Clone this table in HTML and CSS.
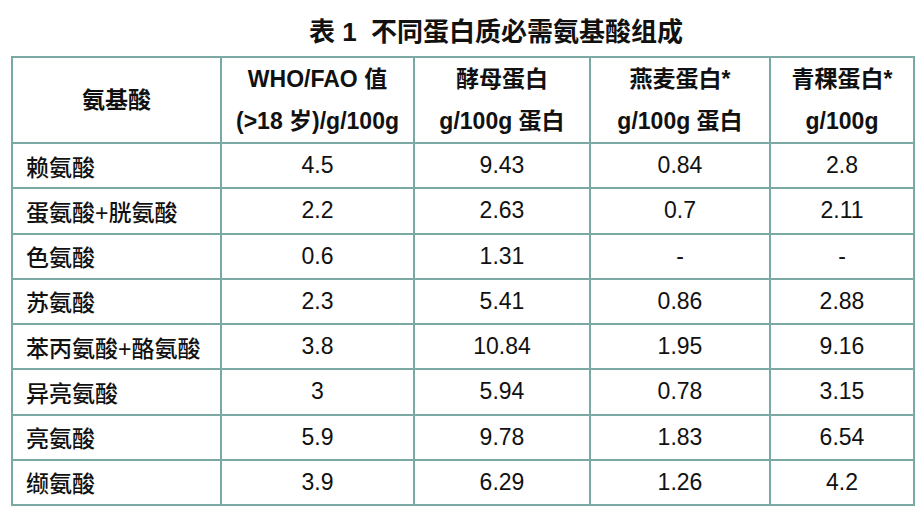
FILE: index.html
```html
<!DOCTYPE html>
<html lang="zh">
<head>
<meta charset="utf-8">
<link rel="stylesheet" href="styles.css">
</head>
<body>
<div class="page">
  <h1 class="title">表 1&nbsp; 不同蛋白质必需氨基酸组成</h1>
  <table class="amino">
    <colgroup>
      <col class="c1"><col class="c2"><col class="c3"><col class="c4"><col class="c5">
    </colgroup>
    <thead>
      <tr>
        <th>氨基酸</th>
        <th><div>WHO/FAO 值</div><div>(&gt;18 岁)/g/100g</div></th>
        <th><div>酵母蛋白</div><div>g/100g 蛋白</div></th>
        <th><div>燕麦蛋白*</div><div>g/100g 蛋白</div></th>
        <th><div>青稞蛋白*</div><div>g/100g</div></th>
      </tr>
    </thead>
    <tbody>
      <tr><td>赖氨酸</td><td>4.5</td><td>9.43</td><td>0.84</td><td>2.8</td></tr>
      <tr><td>蛋氨酸+胱氨酸</td><td>2.2</td><td>2.63</td><td>0.7</td><td>2.11</td></tr>
      <tr><td>色氨酸</td><td>0.6</td><td>1.31</td><td>-</td><td>-</td></tr>
      <tr><td>苏氨酸</td><td>2.3</td><td>5.41</td><td>0.86</td><td>2.88</td></tr>
      <tr><td>苯丙氨酸+酪氨酸</td><td>3.8</td><td>10.84</td><td>1.95</td><td>9.16</td></tr>
      <tr><td>异亮氨酸</td><td>3</td><td>5.94</td><td>0.78</td><td>3.15</td></tr>
      <tr><td>亮氨酸</td><td>5.9</td><td>9.78</td><td>1.83</td><td>6.54</td></tr>
      <tr><td>缬氨酸</td><td>3.9</td><td>6.29</td><td>1.26</td><td>4.2</td></tr>
    </tbody>
  </table>
</div>
</body>
</html>
```

FILE: styles.css
```css
html, body {
  margin: 0;
  padding: 0;
  background: #ffffff;
}
.page {
  width: 924px;
  height: 523px;
  font-family: "Liberation Sans", "Noto Sans CJK SC", sans-serif;
  color: #111111;
  padding-top: 16px;
  box-sizing: border-box;
}
.title {
  margin: 0 0 0 68px;
  height: 40px;
  line-height: 32px;
  font-size: 26px;
  font-weight: bold;
  text-align: center;
  color: #111111;
}
.amino {
  margin-left: 11px;
  border-collapse: collapse;
  table-layout: fixed;
  width: 902px;
  font-size: 23px;
}
.amino th, .amino td {
  border: 2px solid #7aa9a4;
  padding: 0;
  text-align: center;
  vertical-align: middle;
}
.c1 { width: 209px; }
.c2 { width: 193px; }
.c3 { width: 176px; }
.c4 { width: 180px; }
.c5 { width: 144px; }
.amino thead tr {
  height: 86px;
}
.amino th {
  font-weight: bold;
  line-height: 42px;
}
.amino tbody tr {
  height: 45.25px;
}
.amino td {
  font-weight: 500;
}
.amino tbody td:first-child {
  text-align: left;
  padding-left: 13px;
}
```
